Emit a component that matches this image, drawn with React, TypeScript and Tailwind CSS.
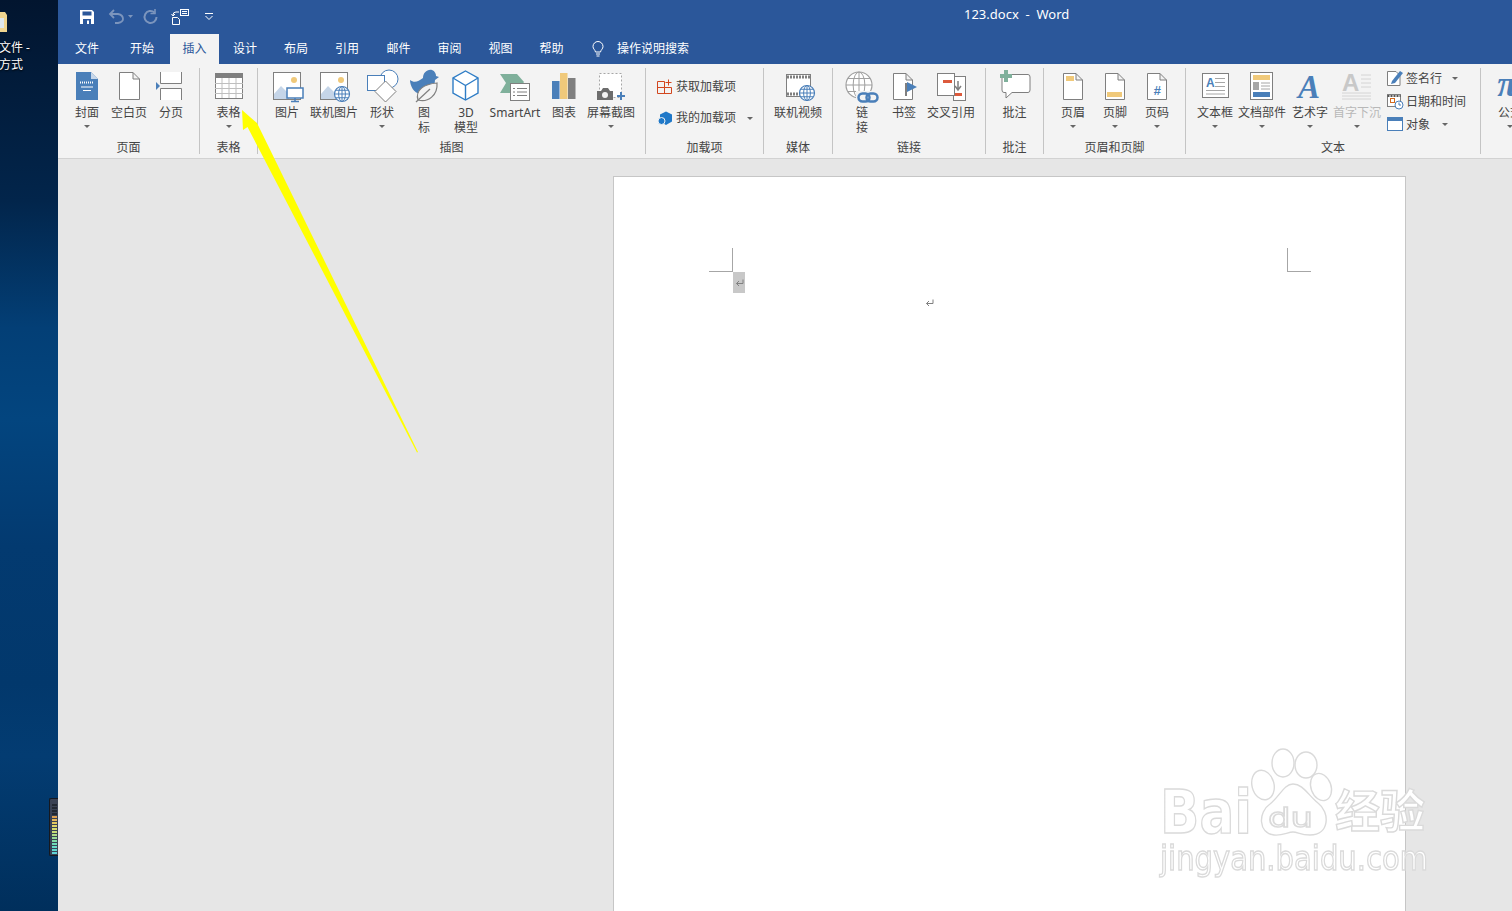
import { ReactNode } from 'react';

const GRAY = '#7f7f7f';
const BLUE = '#4a7fb9';
const YELLOW = '#f0c97a';
const RED = '#dc5a3c';
const GREEN = '#7fb09b';

function Icon({ children }: { children: ReactNode }) {
    return (
        <svg width="36" height="32" viewBox="0 0 36 32" className="overflow-visible shrink-0">
            {children}
        </svg>
    );
}

function Doc({ x, y, w, h }: { x: number; y: number; w: number; h: number }) {
    return (
        <path
            d={`M${x + 0.5} ${y + 0.5} H${x + w - 7} L${x + w - 0.5} ${y + 7} V${y + h - 0.5} H${x + 0.5} Z M${x + w - 7} ${y + 0.5} V${y + 7} H${x + w - 0.5}`}
            fill="#fff"
            stroke={GRAY}
        />
    );
}

function Globe({ cx, cy, r, color = BLUE }: { cx: number; cy: number; r: number; color?: string }) {
    return (
        <g fill="none" stroke={color}>
            <circle cx={cx} cy={cy} r={r} fill="#fff" strokeWidth="1.2" />
            <ellipse cx={cx} cy={cy} rx={r * 0.45} ry={r} />
            <path d={`M${cx - r} ${cy} H${cx + r} M${cx - r * 0.85} ${cy - r * 0.5} H${cx + r * 0.85} M${cx - r * 0.85} ${cy + r * 0.5} H${cx + r * 0.85} M${cx} ${cy - r} V${cy + r}`} />
        </g>
    );
}

const icons: Record<string, ReactNode> = {
    cover: (
        <>
            <path d="M7 2 H22 L29 9 V30 H7 Z" fill={BLUE} />
            <path d="M22 2 L29 9 H22 Z" fill="#c7d7ea" />
            <path d="M11 12.5 H25" stroke="#fff" strokeWidth="2" strokeDasharray="1 1" />
            <path d="M12 17 H24 M14 20.5 H22" stroke="#fff" />
        </>
    ),
    blank: <Doc x={8} y={2} w={21} h={28} />,
    pageBreak: (
        <>
            <path d="M7.5 2 V13.5 H28.5 V2" fill="#fff" stroke={GRAY} />
            <path d="M7.5 30 V18.5 H28.5 V30" fill="#fff" stroke={GRAY} />
            <path d="M3 12 L7 16 L3 20 Z" fill={BLUE} />
        </>
    ),
    table: (
        <>
            <rect x="4.5" y="3.5" width="27" height="25" fill="#fff" stroke={GRAY} />
            <rect x="4" y="3" width="28" height="5" fill={GRAY} />
            <path d="M4 13.5 H32 M4 18.5 H32 M4 23.5 H32 M11 8 V28 M18 8 V28 M25 8 V28" stroke="#bfbfbf" />
        </>
    ),
    picture: (
        <>
            <rect x="4.5" y="2.5" width="27" height="27" fill="#fff" stroke={GRAY} />
            <circle cx="25" cy="10" r="3" fill={YELLOW} />
            <path d="M5 29 V24 L12 16 L20 24 V29 Z" fill="#c5d5e8" />
            <rect x="18" y="18" width="16" height="10" fill="#fff" stroke={BLUE} strokeWidth="1.5" />
            <path d="M26 28 V31 M22 31.5 H30" stroke={BLUE} strokeWidth="1.5" />
        </>
    ),
    onlinePicture: (
        <>
            <rect x="4.5" y="2.5" width="27" height="27" fill="#fff" stroke={GRAY} />
            <circle cx="25" cy="10" r="3" fill={YELLOW} />
            <path d="M5 29 V24 L12 16 L20 24 V29 Z" fill="#c5d5e8" />
            <Globe cx={26} cy={24} r={7.5} />
        </>
    ),
    shapes: (
        <>
            <circle cx="25" cy="9" r="9" fill="#fff" stroke={BLUE} />
            <rect x="3.5" y="5.5" width="17" height="15" fill="#fff" stroke={BLUE} />
            <path d="M21.5 11 L32 21.5 L21.5 32 L11 21.5 Z" fill="#fff" stroke={GRAY} />
        </>
    ),
    icons: (
        <>
            <path d="M4 10 C8 13 12 12 17 8 C17 3 21 -1 26 0 C29 1 30 4 30 6 L33 7 L29 10 C29 17 24 24 14 24 C8 23 4 16 4 10 Z" fill={BLUE} />
            <path d="M12 30 C9 20 18 14 31 13 C32 25 22 33 12 30 Z" fill="#f3f3f3" stroke={GRAY} strokeWidth="1.2" />
            <path d="M10 32 L24 19" stroke={GRAY} strokeWidth="1.2" />
        </>
    ),
    cube: (
        <g fill="none" stroke="#2f7dc6" strokeWidth="1.4">
            <path d="M17.5 1 L30 8 V23 L17.5 30 L5 23 V8 Z" fill="#fff" />
            <path d="M5 8 L17.5 15.5 L30 8 M17.5 15.5 V30" />
        </g>
    ),
    smartArt: (
        <>
            <path d="M3 4 H20 L27 12 L20 23 H3 L9 13 Z" fill={GREEN} />
            <rect x="13.5" y="13.5" width="19" height="17" fill="#fff" stroke={GRAY} />
            <path d="M16 18.5 H18 M20 18.5 H30 M16 22 H18 M20 22 H30 M16 25.5 H18 M20 25.5 H30" stroke={GRAY} />
        </>
    ),
    chart: (
        <>
            <rect x="6" y="11" width="7.5" height="18" fill={BLUE} />
            <rect x="14" y="3" width="7.5" height="26" fill={YELLOW} />
            <rect x="22" y="8" width="7.5" height="21" fill={GRAY} />
        </>
    ),
    screenshot: (
        <>
            <rect x="6.5" y="3.5" width="22" height="24" fill="#fff" stroke="#a6a6a6" strokeDasharray="2 2" />
            <path d="M4 21 H8 L10 18 H15 L17 21 H20 V30 H4 Z" fill="#6d6d6d" />
            <circle cx="12" cy="25" r="3" fill="#f3f3f3" />
            <path d="M24 26 H32 M28 22 V30" stroke={BLUE} strokeWidth="2" />
        </>
    ),
    onlineVideo: (
        <>
            <rect x="6.5" y="4.5" width="24" height="22" fill="#fff" stroke={GRAY} />
            <path d="M7 7 H30 M7 24 H30" stroke={GRAY} strokeWidth="3" strokeDasharray="2 1" />
            <Globe cx={27} cy={23} r={7.5} />
        </>
    ),
    link: (
        <>
            <Globe cx={15} cy={15} r={13} color="#a0a0a0" />
            <rect x="12" y="21" width="24" height="13" fill="#f3f3f3" />
            <rect x="14.5" y="23.5" width="11" height="8" rx="4" fill="none" stroke={BLUE} strokeWidth="2.5" />
            <rect x="22.5" y="23.5" width="11" height="8" rx="4" fill="none" stroke={BLUE} strokeWidth="2.5" />
        </>
    ),
    bookmark: (
        <>
            <Doc x={7} y={3} w={20} h={27} />
            <rect x="19" y="13" width="2" height="13" fill={GRAY} />
            <path d="M21 12 L31 17 L21 22 Z" fill={BLUE} />
        </>
    ),
    crossRef: (
        <>
            <rect x="20.5" y="6.5" width="12" height="24" fill="#fff" stroke={GRAY} />
            <rect x="4.5" y="3.5" width="17" height="22" fill="#fff" stroke={GRAY} />
            <rect x="10" y="10" width="9" height="3" fill={RED} />
            <rect x="22" y="23" width="7" height="3" fill={RED} />
            <path d="M25 11 V19 M22 16 L25 20 L28 16" fill="none" stroke={GRAY} strokeWidth="1.5" />
        </>
    ),
    comment: (
        <>
            <path d="M7 4.5 H31 Q33 4.5 33 7 V20 Q33 22.5 31 22.5 H15 L9 28 V22.5 H7 Q5 22.5 5 20 V7 Q5 4.5 7 4.5 Z" fill="#fff" stroke={GRAY} />
            <path d="M3 6 H15 M9 0 V12" stroke={GREEN} strokeWidth="4" />
        </>
    ),
    header: (
        <>
            <Doc x={8} y={3} w={20} h={27} />
            <rect x="11" y="6" width="8" height="5" fill={YELLOW} />
        </>
    ),
    footer: (
        <>
            <Doc x={8} y={3} w={20} h={27} />
            <rect x="10" y="22" width="15" height="5" fill={YELLOW} />
        </>
    ),
    pageNumber: (
        <>
            <Doc x={8} y={3} w={20} h={27} />
            <text x="18" y="25" textAnchor="middle" fontSize="13" fontWeight="700" fontStyle="italic" fill={BLUE} fontFamily="Liberation Sans">#</text>
        </>
    ),
    textBox: (
        <>
            <rect x="5.5" y="3.5" width="26" height="24" fill="#fff" stroke={GRAY} />
            <text x="9" y="17" fontSize="12" fontWeight="700" fill={BLUE} fontFamily="Liberation Sans">A</text>
            <path d="M18 8.5 H28 M18 12.5 H28 M18 16.5 H28 M9 20.5 H28 M9 24 H28" stroke="#a6a6a6" />
        </>
    ),
    quickParts: (
        <>
            <rect x="6.5" y="2.5" width="22" height="27" fill="#fff" stroke={GRAY} />
            <rect x="9" y="5" width="17" height="5" fill={YELLOW} />
            <rect x="9" y="12" width="6" height="8" fill="#a6a6a6" />
            <path d="M17 13 H26 M17 16 H26 M17 19 H26" stroke="#a6a6a6" />
            <rect x="9" y="22" width="17" height="5" fill={BLUE} />
        </>
    ),
    wordArt: (
        <text x="17" y="28" textAnchor="middle" fontSize="33" fontWeight="700" fontStyle="italic" fill={BLUE} fontFamily="Liberation Serif">A</text>
    ),
    dropCap: (
        <>
            <text x="3" y="21" fontSize="24" fontWeight="700" fill="#c8c8c8" fontFamily="Liberation Sans">A</text>
            <path d="M22 5 H32 M22 9 H32 M22 13 H32 M22 17 H32 M3 23 H32 M3 26 H32 M3 29 H32" stroke="#d4d4d4" />
        </>
    ),
    formula: (
        <text x="15" y="26" textAnchor="middle" fontSize="36" fontWeight="700" fontStyle="italic" fill={BLUE} fontFamily="Liberation Serif">π</text>
    ),
};

function Caret() {
    return (
        <svg width="6" height="3" viewBox="0 0 6 3" className="block">
            <path d="M0 0 H6 L3 3 Z" fill="#666" />
        </svg>
    );
}

function LargeButton({ icon, lines, caret, width, disabled }: { icon: string; lines: string[]; caret?: boolean; width: string; disabled?: boolean }) {
    return (
        <div className={`flex flex-col items-center shrink-0 ${width}`}>
            <div className="h-[35px]">
                <Icon>{icons[icon]}</Icon>
            </div>
            <div className={`flex flex-col items-center text-xs leading-[15px] whitespace-nowrap ${disabled ? 'text-[#b8b8b8]' : 'text-[#444]'}`}>
                {lines.map((line) => (
                    <span key={line}>{line}</span>
                ))}
            </div>
            {caret && (
                <div className="mt-[5px]">
                    <Caret />
                </div>
            )}
        </div>
    );
}

function Group({ label, width, className, children }: { label?: string; width: string; className?: string; children: ReactNode }) {
    return (
        <div className={`flex flex-col shrink-0 ${width}`}>
            <div className={`h-[74px] flex ${className ?? ''}`}>{children}</div>
            <div className="h-[20px] text-center text-xs leading-[20px] text-[#444]">{label}</div>
        </div>
    );
}

function Sep() {
    return <div className="w-px h-[86px] mt-[4px] bg-[#c4c4c4] shrink-0" />;
}

function SmallRow({ icon, label, caret, rowClass }: { icon: ReactNode; label: string; caret?: string; rowClass: string }) {
    return (
        <div className={`flex items-center gap-[2px] text-xs text-[#444] whitespace-nowrap ${rowClass}`}>
            <svg width="17" height="17" viewBox="0 0 17 17" className="shrink-0 overflow-visible">
                {icon}
            </svg>
            <span>{label}</span>
            {caret && (
                <div className={caret}>
                    <Caret />
                </div>
            )}
        </div>
    );
}

function TitleBar() {
    return (
        <div className="h-[34px] flex items-center relative">
            <svg width="160" height="20" viewBox="0 0 160 20" className="ml-[20px] overflow-visible">
                {/* save */}
                <path d="M2 3 H14 L16 5 V17 H2 Z" fill="#fff" />
                <rect x="4.5" y="4.5" width="9" height="4" fill="#2b579a" />
                <rect x="5" y="12" width="8" height="5" fill="#2b579a" />
                <rect x="9" y="13.5" width="2" height="3.5" fill="#fff" />
                {/* undo */}
                <path d="M32 7 H40 Q45 8 45 12 Q45 15 40 16 H37 M36 3 L32 7 L36 11" fill="none" stroke="#7c95bd" strokeWidth="1.8" />
                <path d="M50 8 H55 L52.5 11 Z" fill="#7c95bd" />
                {/* redo */}
                <path d="M76.5 5.5 A6 6 0 1 0 78.5 10" fill="none" stroke="#7c95bd" strokeWidth="2" />
                <path d="M77 2 V6.5 H72.5" fill="none" stroke="#7c95bd" strokeWidth="1.6" />
                {/* touch mode */}
                <rect x="102.5" y="2.5" width="8" height="6" fill="none" stroke="#fff" />
                <path d="M104 4.5 H109 M104 6.5 H109" stroke="#fff" />
                <path d="M101 5 H98 Q95 5 95 8 M93.5 7 L95 9 L97 7" fill="none" stroke="#fff" />
                <path d="M94.5 10.5 H99.5 L101.5 12.5 V17.5 H94.5 Z" fill="#2b579a" stroke="#fff" />
                {/* customize */}
                <path d="M127 6.5 H135 M127.5 9 L131 12.5 L134.5 9" fill="none" stroke="#fff" />
            </svg>
            <div className="absolute left-[906px] top-[6px] text-[13px] leading-[16px] text-white whitespace-pre">123.docx  -  Word</div>
        </div>
    );
}

const tabs: [string, string][] = [
    ['文件', 'w-[50px]'],
    ['开始', 'w-[58px] pl-[2px]'],
    ['插入', 'w-[49px]'],
    ['设计', 'w-[52px]'],
    ['布局', 'w-[50px]'],
    ['引用', 'w-[52px]'],
    ['邮件', 'w-[51px]'],
    ['审阅', 'w-[51px]'],
    ['视图', 'w-[51px]'],
    ['帮助', 'w-[51px]'],
];

function TabBar() {
    return (
        <div className="h-[30px] flex pl-[4px] text-xs">
            {tabs.map(([name, width]) => (
                <div
                    key={name}
                    className={`${width} flex items-center justify-center ${name === '插入' ? 'bg-[#f3f3f3] text-[#2b579a]' : 'text-white'}`}
                >
                    {name}
                </div>
            ))}
            <div className="flex items-center ml-[14px] gap-[12px] text-white">
                <svg width="14" height="16" viewBox="0 0 14 16">
                    <path d="M4.5 11 C4 8.5 2 8 2 5.5 A5 5 0 0 1 12 5.5 C12 8 10 8.5 9.5 11 Z M5 13 H9 M5.5 15 H8.5" fill="none" stroke="#fff" />
                </svg>
                <span>操作说明搜索</span>
            </div>
        </div>
    );
}

function Ribbon() {
    return (
        <div className="h-[95px] bg-[#f3f3f3] border-b border-[#d2d2d2] flex overflow-hidden shrink-0">
            <Group label="页面" width="w-[141px]" className="pt-[6px] pl-[11px]">
                <LargeButton icon="cover" lines={['封面']} caret width="w-[36px]" />
                <LargeButton icon="blank" lines={['空白页']} width="w-[48px]" />
                <LargeButton icon="pageBreak" lines={['分页']} width="w-[36px]" />
            </Group>
            <Sep />
            <Group label="表格" width="w-[57px]" className="pt-[6px] justify-center">
                <LargeButton icon="table" lines={['表格']} caret width="w-[36px]" />
            </Group>
            <Sep />
            <Group label="插图" width="w-[387px]" className="pt-[6px] pl-[11px]">
                <LargeButton icon="picture" lines={['图片']} width="w-[36px]" />
                <LargeButton icon="onlinePicture" lines={['联机图片']} width="w-[58px]" />
                <LargeButton icon="shapes" lines={['形状']} caret width="w-[38px]" />
                <LargeButton icon="icons" lines={['图', '标']} width="w-[46px]" />
                <LargeButton icon="cube" lines={['3D', '模型']} width="w-[38px]" />
                <LargeButton icon="smartArt" lines={['SmartArt']} width="w-[60px]" />
                <LargeButton icon="chart" lines={['图表']} width="w-[38px]" />
                <LargeButton icon="screenshot" lines={['屏幕截图']} caret width="w-[56px]" />
            </Group>
            <Sep />
            <Group label="加载项" width="w-[117px]" className="flex-col pt-[11px] pl-[11px] gap-[7px]">
                <SmallRow
                    rowClass="h-[24px]"
                    label="获取加载项"
                    icon={<path d="M0.5 2.5 H7.5 V8.5 H14.5 V14.5 H0.5 Z M0.5 8.5 H7.5 V14.5 M11.5 0.5 V6.5 M8.5 3.5 H14.5" fill="none" stroke="#d2461e" />}
                />
                <SmallRow
                    rowClass="h-[24px]"
                    label="我的加载项"
                    caret="ml-[9px]"
                    icon={
                        <>
                            <path d="M9 1.5 L15 4.5 V11.5 L9 15 L3 11.5 V4.5 Z" fill="#1f78c8" />
                            <circle cx="4.5" cy="11" r="3.5" fill="#1f78c8" stroke="#f3f3f3" />
                        </>
                    }
                />
            </Group>
            <Sep />
            <Group label="媒体" width="w-[68px]" className="pt-[6px] justify-center">
                <LargeButton icon="onlineVideo" lines={['联机视频']} width="w-[56px]" />
            </Group>
            <Sep />
            <Group label="链接" width="w-[152px]" className="pt-[6px] pl-[9px]">
                <LargeButton icon="link" lines={['链', '接']} width="w-[40px]" />
                <LargeButton icon="bookmark" lines={['书签']} width="w-[44px]" />
                <LargeButton icon="crossRef" lines={['交叉引用']} width="w-[50px]" />
            </Group>
            <Sep />
            <Group label="批注" width="w-[57px]" className="pt-[6px] justify-center">
                <LargeButton icon="comment" lines={['批注']} width="w-[40px]" />
            </Group>
            <Sep />
            <Group label="页眉和页脚" width="w-[141px]" className="pt-[6px] pl-[8px]">
                <LargeButton icon="header" lines={['页眉']} caret width="w-[42px]" />
                <LargeButton icon="footer" lines={['页脚']} caret width="w-[42px]" />
                <LargeButton icon="pageNumber" lines={['页码']} caret width="w-[42px]" />
            </Group>
            <Sep />
            <Group label="文本" width="w-[294px]" className="pt-[6px] pl-[8px]">
                <LargeButton icon="textBox" lines={['文本框']} caret width="w-[42px]" />
                <LargeButton icon="quickParts" lines={['文档部件']} caret width="w-[52px]" />
                <LargeButton icon="wordArt" lines={['艺术字']} caret width="w-[44px]" />
                <LargeButton icon="dropCap" lines={['首字下沉']} caret disabled width="w-[50px]" />
                <div className="flex flex-col pl-[5px] -mt-[3px]">
                    <SmallRow
                        rowClass="h-[23px]"
                        label="签名行"
                        caret="ml-[8px]"
                        icon={
                            <>
                                <path d="M0.5 1.5 H9 L13 5.5 V15.5 H0.5 Z" fill="#fff" stroke={GRAY} />
                                <path d="M5 11 L13 1 L16 3 L8 13 L4 14 Z" fill={BLUE} />
                            </>
                        }
                    />
                    <SmallRow
                        rowClass="h-[23px]"
                        label="日期和时间"
                        icon={
                            <>
                                <rect x="0.5" y="1.5" width="13" height="12" fill="#fff" stroke={GRAY} />
                                <path d="M0.5 3 H13.5" stroke="#555" strokeWidth="2" strokeDasharray="2 1" />
                                <rect x="3.5" y="5.5" width="4" height="4" fill="none" stroke="#d2691e" />
                                <circle cx="12" cy="12" r="4" fill="#fff" stroke={BLUE} />
                                <path d="M12 9.5 V12 H14" fill="none" stroke={BLUE} />
                            </>
                        }
                    />
                    <SmallRow
                        rowClass="h-[23px]"
                        label="对象"
                        caret="ml-[10px]"
                        icon={
                            <>
                                <rect x="0.5" y="1.5" width="15" height="13" fill="#fff" stroke={BLUE} />
                                <rect x="0" y="1" width="16" height="4" fill={BLUE} />
                            </>
                        }
                    />
                </div>
            </Group>
            <Sep />
            <Group label="" width="w-[58px]" className="pt-[6px]">
                <LargeButton icon="formula" lines={['公式']} caret width="w-[58px]" />
            </Group>
        </div>
    );
}

function ReturnMark() {
    return (
        <svg width="9" height="8" viewBox="0 0 9 8">
            <path d="M8 0.5 V4.5 H1.5 M4 2 L1.5 4.5 L4 7" fill="none" stroke="#808080" />
        </svg>
    );
}

function Page() {
    return (
        <div className="w-[793px] h-[800px] bg-white border border-[#c6c6c6] shrink-0 pt-[71px] pl-[95px] pr-[94px]">
            <div className="flex justify-between">
                <div className="w-[24px] h-[24px] border-r border-b border-[#a6a6a6]" />
                <div className="w-[24px] h-[24px] border-l border-b border-[#a6a6a6]" />
            </div>
            <div className="ml-[24px] w-[12px] h-[21px] bg-[#c8c8c8] flex items-center justify-center">
                <ReturnMark />
            </div>
            <div className="ml-[216px] mt-[6px]">
                <ReturnMark />
            </div>
        </div>
    );
}

function Desktop() {
    return (
        <div className="relative w-[58px] h-full shrink-0 bg-[linear-gradient(180deg,#02152f_0%,#02254b_22%,#033f76_36%,#03457f_46%,#033a70_60%,#02386c_75%,#033c72_83%,#002f5c_100%)] overflow-hidden text-xs text-white [text-shadow:0_1px_2px_#000]">
            <svg width="10" height="24" viewBox="0 0 10 24" className="absolute left-0 top-[10px]">
                <path d="M0 2 H5 L7 5 V22 H0 Z" fill="#f0d590" />
                <rect x="0" y="8" width="4" height="10" fill="#dfe8ee" />
            </svg>
            <div className="-ml-[1px] pt-[39px] leading-[17px] whitespace-nowrap">
                <div>文件 -</div>
                <div>方式</div>
            </div>
            <div className="absolute left-[49px] top-[798px] w-[9px] h-[58px] bg-[#3a4254] border border-r-0 border-[#15181f] rounded-l-[2px] flex flex-col items-end pt-[5px] gap-[1px] pr-[1px]">
                {['#222832', '#222832', '#222832', '#222832', '#e0a050', '#e3b85c', '#e3c860', '#e0d468', '#d8dc70', '#c8dc78', '#b0dc88', '#98dc98', '#80dca8', '#70dcb8', '#68dcc8', '#60d8d0', '#60d4d8'].map((color, i) => (
                    <div key={i} className="w-[5px] h-[2px]" style={{ backgroundColor: color }} />
                ))}
            </div>
        </div>
    );
}

function Watermark() {
    const stroke = { fill: '#fff', stroke: '#dadada', strokeWidth: 1.4 };
    return (
        <svg width="1512" height="911" viewBox="0 0 1512 911" className="absolute left-0 top-0 pointer-events-none">
            <g style={{ filter: 'blur(0.4px)' }} fontFamily="DejaVu Sans">
                <text x="1160" y="833" fontSize="60" fontWeight="700" {...stroke} textLength="92" lengthAdjust="spacingAndGlyphs">Bai</text>
                <ellipse cx="1263" cy="785" rx="11" ry="15" {...stroke} transform="rotate(-15 1263 785)" />
                <ellipse cx="1283" cy="763" rx="11" ry="14" {...stroke} />
                <ellipse cx="1306" cy="765" rx="11" ry="13" {...stroke} />
                <ellipse cx="1321" cy="787" rx="10" ry="14" {...stroke} transform="rotate(-20 1321 787)" />
                <path d="M1293 784 C1303 784 1308 795 1318 803 C1330 812 1330 835 1310 835 C1300 835 1298 832 1293 832 C1288 832 1282 836 1274 835 C1258 833 1258 812 1270 804 C1280 796 1284 784 1293 784 Z" {...stroke} />
                <text x="1268" y="827" fontSize="27" {...stroke} textLength="45" lengthAdjust="spacingAndGlyphs">du</text>
                <text x="1335" y="828" fontSize="45" fontWeight="700" fontFamily="Noto Sans CJK SC" {...stroke} textLength="90">经验</text>
                <text x="1160" y="870" fontSize="33" {...stroke} textLength="268" lengthAdjust="spacingAndGlyphs">jingyan.baidu.com</text>
            </g>
        </svg>
    );
}

function Arrow() {
    return (
        <svg width="1512" height="911" viewBox="0 0 1512 911" className="absolute left-0 top-0 pointer-events-none">
            <polygon points="242,110 257,123 418,452 417,452.5 247.5,127 243,130" fill="#ffff00" />
        </svg>
    );
}

export default function App() {
    return (
        <div className="relative w-[1512px] h-[911px] overflow-hidden flex bg-[#e6e6e6] [font-family:'Noto_Sans','Noto_Sans_CJK_SC',sans-serif]">
            <Desktop />
            <div className="flex-1 flex flex-col min-w-0 h-full">
                <div className="bg-[#2b579a] shrink-0">
                    <TitleBar />
                    <TabBar />
                </div>
                <Ribbon />
                <div className="flex-1 pt-[17px] pl-[555px] overflow-hidden">
                    <Page />
                </div>
            </div>
            <Watermark />
            <Arrow />
        </div>
    );
}
